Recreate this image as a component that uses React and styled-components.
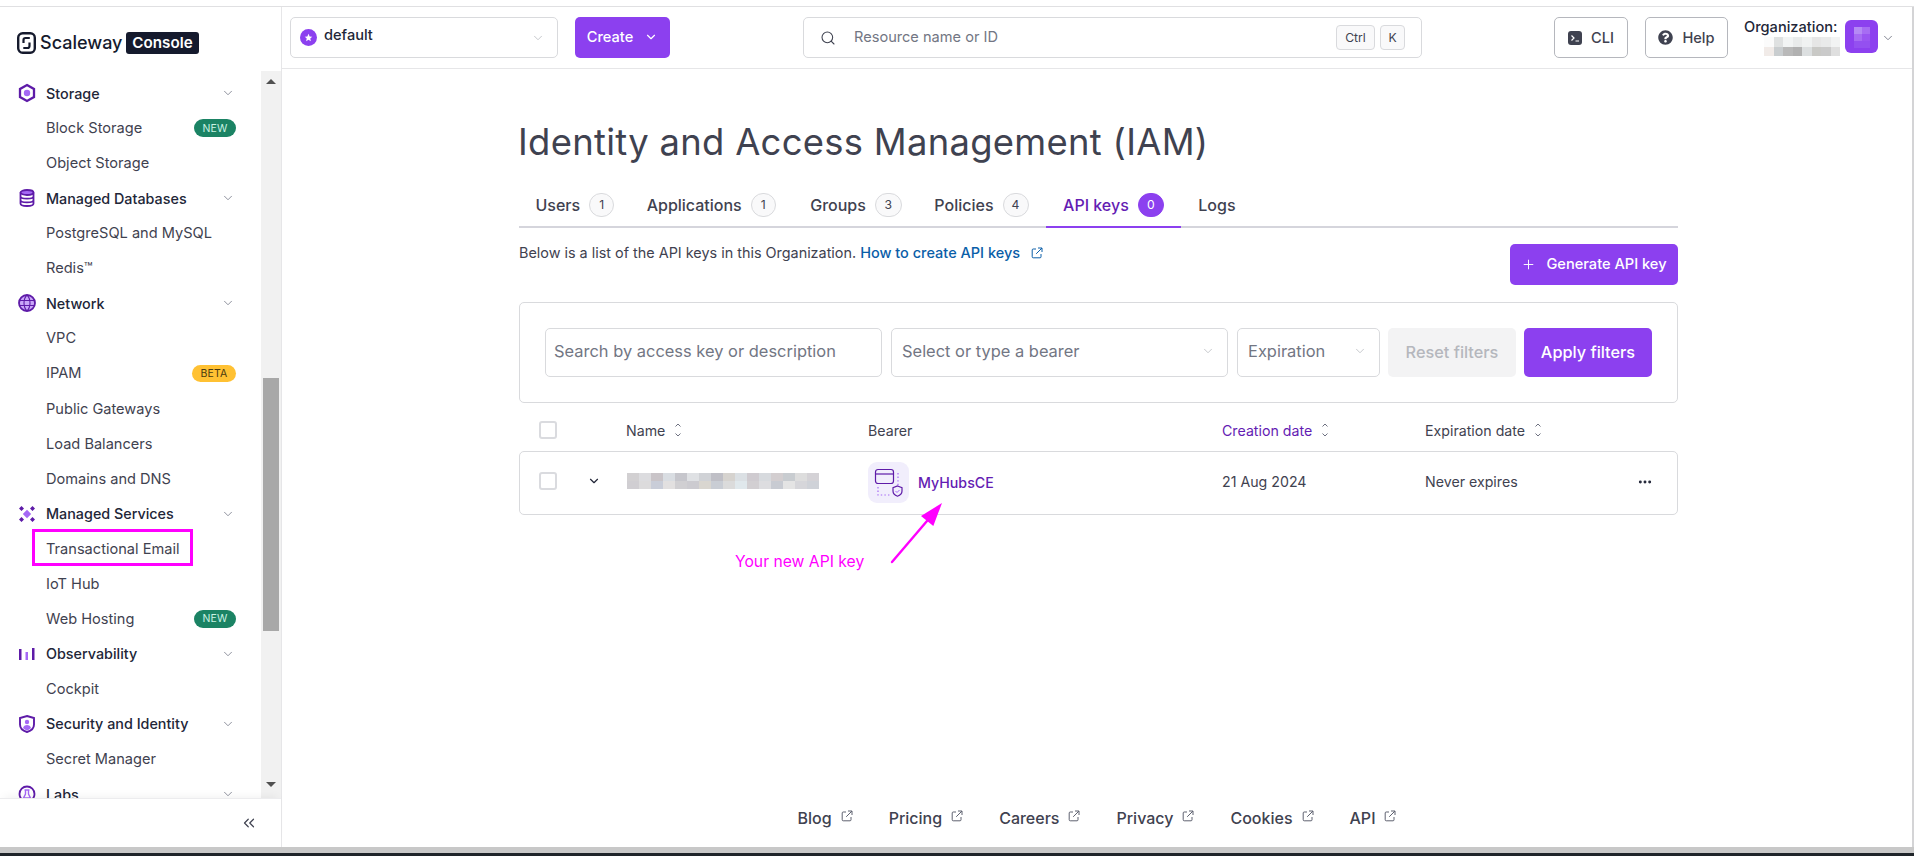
import React from "react";
import styled, { createGlobalStyle } from "styled-components";
import { ChevronDown, ChevronsLeft, Search, Plus, Ellipsis } from "lucide-react";
import { FaQuestionCircle } from "react-icons/fa";

const Global = createGlobalStyle`
  html, body { margin: 0; padding: 0; height: 856px; overflow: hidden; background: #fff; }
  body { font-family: Inter, "Liberation Sans", sans-serif; color: #3f4250; }
  * { box-sizing: border-box; }
`;

const Page = styled.div`
  width: 1914px; height: 856px; display: flex; flex-direction: column; overflow: hidden; background: #fff;
`;
const TopStrip = styled.div`
  height: 7px; flex: none; border-bottom: 1px solid #e0e0e2; background: #fff;
`;
const Shell = styled.div`
  flex: 1; min-height: 0; display: flex; border-right: 2px solid #d4d4d6;
`;
const BottomBar = styled.div`
  height: 6px; flex: none; background: #c8c8c8;
`;
const Taskbar = styled.div`
  height: 3px; flex: none; background: #1f2429;
`;

/* sidebar */
const Sidebar = styled.aside`
  width: 282px; flex: none; display: flex; flex-direction: column; border-right: 1px solid #e6e6e8;
`;
const LogoBar = styled.div`
  height: 64px; flex: none; display: flex; align-items: center; padding: 7px 0 0 17px;
`;
const LogoWord = styled.span`
  margin-left: 4px; width: 81px; font-size: 18px; font-weight: 500; color: #151a2d; white-space: nowrap;
`;
const LogoBadge = styled.span`
  margin-left: 5px; height: 22px; width: 73px; display: flex; align-items: center; justify-content: center;
  background: #151a2d; color: #fff; font-size: 15.2px; font-weight: 600; border-radius: 3px;
`;
const SideBody = styled.div`
  flex: 1; min-height: 0; display: flex;
`;
const Nav = styled.nav`
  width: 261px; flex: none; overflow: hidden; padding-top: 4.6px;
`;
const NavGroup = styled.div`
  height: 35.05px; display: flex; align-items: center; padding: 0 26px 0 17px;
  font-size: 14.35px; font-weight: 500; color: #222638;
`;
const NavIcon = styled.span`
  width: 20px; height: 20px; flex: none; margin-right: 9px; display: flex; align-items: center; justify-content: center;
`;
const NavLabel = styled.span`
  flex: 1; white-space: nowrap;
`;
const NavItem = styled.div`
  position: relative; height: 35.05px; display: flex; align-items: center; padding: 0 25px 0 46px;
  font-size: 14.6px; color: #3f4250;
`;
const Highlight = styled.span`
  position: absolute; left: 32px; top: -2px; width: 161px; height: 37px; border: 3px solid #ff00ff;
`;
const Pill = styled.span`
  height: ${p => (p.$beta ? 17 : 18)}px; width: ${p => (p.$beta ? 44 : 42)}px; display: flex; align-items: center; justify-content: center;
  border-radius: 9px; font-size: 10.5px; letter-spacing: 0.2px;
  background: ${p => (p.$beta ? "#ffc133" : "#1b8364")};
  color: ${p => (p.$beta ? "#4a3a10" : "#c9f2e3")};
`;
const Scrollbar = styled.div`
  width: 20px; flex: none; background: #f1f1f1; position: relative; display: flex; flex-direction: column; align-items: center;
`;
const ArrowUp = styled.span`
  margin-top: 8px; width: 0; height: 0; border-left: 5px solid transparent; border-right: 5px solid transparent; border-bottom: 5px solid #505050;
`;
const Thumb = styled.div`
  margin-top: 294px; width: 16px; height: 253px; background: #a8a8a8;
`;
const ArrowDown = styled.span`
  margin-top: 151px; width: 0; height: 0; border-left: 5px solid transparent; border-right: 5px solid transparent; border-top: 5px solid #505050;
`;
const SideFooter = styled.div`
  height: 49px; flex: none; display: flex; align-items: center; justify-content: flex-end; padding-right: 23px;
  border-top: 1px solid #ececee; box-shadow: 0 -6px 8px -4px rgba(0,0,0,.05); background: #fff; position: relative; color: #3f4250;
`;

/* main */
const Main = styled.main`
  flex: 1; min-width: 0; position: relative; display: flex; flex-direction: column;
`;
const Header = styled.header`
  height: 62px; flex: none; display: flex; align-items: center; padding: 0 0 0 8px; border-bottom: 1px solid #e6e6e8;
`;
const ProjectSelect = styled.div`
  width: 268px; height: 41px; display: flex; align-items: center; padding: 0 12px 0 9px;
  border: 1px solid #d9dadd; border-radius: 5px; font-size: 14.6px; font-weight: 500; color: #222638;
`;
const ProjectDot = styled.span`
  width: 17px; height: 17px; flex: none; margin-right: 7px; border-radius: 50%; background: #8c40ef; color: #fff;
  display: flex; align-items: center; justify-content: center;
`;
const Grow = styled.span`
  flex: 1; margin-bottom: 5px;
`;
const PrimaryButton = styled.button`
  height: ${p => p.$h || 41}px; width: ${p => p.$w}px; flex: none; margin-left: ${p => p.$ml || 0}px; border: 0; border-radius: 5px;
  background: #8c40ef; color: #fff; font-family: inherit; font-size: ${p => p.$fs || 14.6}px; font-weight: 500;
  display: flex; align-items: center; justify-content: center; gap: ${p => p.$gap || 8}px; padding: ${p => p.$pb ? `0 0 ${p.$pb}px` : 0};
`;
const TopSearch = styled.div`
  width: 619px; height: 41px; flex: none; margin-left: 133px; display: flex; align-items: center; padding: 0 16px 0 16px;
  border: 1px solid #d9dadd; border-radius: 5px; font-size: 14.6px; color: #727683;
`;
const SearchText = styled.span`
  flex: 1; margin-left: 18px; margin-bottom: 1px;
`;
const Kbd = styled.span`
  height: 25px; width: ${p => p.$w}px; margin-left: ${p => p.$ml || 0}px; display: flex; align-items: center; justify-content: center;
  border: 1px solid #d9dadd; border-radius: 4px; background: #f9f9fa; font-size: 12.2px; color: #3f4250;
`;
const OutlineButton = styled.button`
  height: 41px; width: ${p => p.$w}px; flex: none; margin-left: ${p => p.$ml}px; display: flex; align-items: center; justify-content: center; gap: 9px; padding: 0;
  background: #fff; border: 1px solid #b5b7bd; border-radius: 5px; font-family: inherit; font-size: 14.6px; font-weight: 500; color: #3f4250;
`;
const OrgBlock = styled.div`
  width: 96px; margin-left: 16px; flex: none; height: 41px; margin-top: -1px; position: relative; font-size: 14.6px; font-weight: 500; color: #222638;
`;
const OrgName = styled.div`
  padding-top: 1px; line-height: 18px; white-space: nowrap;
`;
const Blur = styled.svg`
  display: block; flex: none; shape-rendering: crispEdges;
`;
const Avatar = styled.svg`
  flex: none; margin-left: 5px; margin-top: -3px; display: block;
`;
const OrgChevron = styled.span`
  margin-left: 3px; color: #727683; display: flex; margin-top: 0;
`;

const Content = styled.div`
  flex: 1; min-height: 0; padding: 50px 234px 0 237px;
`;
const Title = styled.h1`
  margin: -1px 0 0 -1px; height: 48px; font-size: 36.4px; line-height: 48px; font-weight: 400; color: #3f4250; letter-spacing: 0.3px; white-space: nowrap;
`;
const Tabs = styled.div`
  margin-top: 17px; height: 45px; display: flex; border-bottom: 2px solid #d5d5dc; font-size: 16px; font-weight: 500;
`;
const Tab = styled.div`
  height: 45px; padding: 0 ${p => p.$pr ?? 16}px 0 ${p => p.$pl ?? 17.5}px; display: flex; align-items: center; gap: 9px;
  color: ${p => (p.$active ? "#641cb3" : "#3f4250")};
  border-bottom: 2px solid ${p => (p.$active ? "#8c40ef" : "transparent")};
`;
const Count = styled.span`
  width: ${p => p.$w || 25}px; height: 24px; border-radius: 12px; display: flex; align-items: center; justify-content: center; font-size: 12.2px; font-weight: 400;
  border: 1px solid ${p => (p.$active ? "#8c40ef" : "#d9dadd")};
  background: ${p => (p.$active ? "#8c40ef" : "#f9f9fa")};
  color: ${p => (p.$active ? "#fff" : "#3f4250")};
`;
const DescRow = styled.div`
  margin-top: 16px; display: flex; justify-content: space-between; align-items: flex-start;
`;
const Desc = styled.p`
  margin: -1px 0 0; font-size: 14.4px; line-height: 20px; color: #3f4250; white-space: nowrap; display: flex; align-items: center;
`;
const DocLink = styled.a`
  margin-left: 4px; color: #0a5ea8; font-weight: 500; font-size: 14.5px; display: flex; align-items: center; gap: 11px;
`;
const FilterCard = styled.section`
  margin-top: 17px; height: 101px; border: 1px solid #d9dadd; border-radius: 5px; padding: 25px 25px 0 25px; display: flex;
`;
const Field = styled.div`
  width: ${p => p.$w}px; height: 49px; flex: none; margin-right: ${p => p.$mr}px; display: flex; align-items: center; padding: 0 ${p => p.$right || 12}px 3px ${p => p.$left || 10}px;
  border: 1px solid #d9dadd; border-radius: 5px; font-size: 16.45px; color: #727683;
`;
const FieldText = styled.span`
  flex: 1; white-space: nowrap;
`;
const ResetButton = styled.div`
  width: 128px; height: 49px; flex: none; margin-right: 8px; padding-bottom: 1px; border-radius: 5px; background: #f3f3f4; color: #b5b7bd;
  font-size: 16.3px; font-weight: 500; display: flex; align-items: center; justify-content: center;
`;
const TableGrid = `
  display: grid; grid-template-columns: 18px 69px 242px 354px 203px 1fr; align-items: center;
`;
const TableHead = styled.div`
  ${TableGrid}
  margin-top: 6px; height: 42px; padding-left: 20px; font-size: 14.2px; color: #3f4250;
`;
const HeadCell = styled.div`
  display: flex; align-items: center; gap: 9px; white-space: nowrap; color: ${p => (p.$active ? "#641cb3" : "#3f4250")};
`;
const Check = styled.span`
  width: 18px; height: 18px; display: block; border: 2px solid #dadbdf; border-radius: 3px; background: #fff;
`;
const TableRow = styled.div`
  ${TableGrid}
  height: 64px; padding: 0 0 4px 19px; border: 1px solid #d9dadd; border-radius: 5px; font-size: 14.2px; color: #3f4250; position: relative;
`;
const RowChevron = styled.span`
  padding-left: 30px; display: flex; color: #222638;
`;
const NameBlur = styled.div`
  margin-left: 1px;
`;
const BearerCell = styled.div`
  display: flex; align-items: center; gap: 9px; margin-top: 2px;
`;
const BearerLink = styled.a`
  color: #641cb3; font-weight: 500;
`;
const RowDots = styled.span`
  position: absolute; right: 24px; top: 22px; display: flex; color: #222638;
`;
const Footer = styled.footer`
  height: 56px; flex: none; display: flex; align-items: center; justify-content: center; gap: 36px; padding-bottom: 2px; font-size: 16px; font-weight: 500; color: #3f4250;
`;
const FooterLink = styled.a`
  display: flex; align-items: flex-start; gap: 9px;
`;
const FooterIcon = styled.span`
  display: flex; margin-top: 2px; color: #5f6270;
`;
const ArrowNote = styled.div`
  position: absolute; left: 453px; top: 489px; width: 220px; height: 80px; pointer-events: none;
`;
const ArrowSvg = styled.svg`
  position: absolute; left: 150px; top: 0;
`;
const NoteText = styled.span`
  position: absolute; left: 0; top: 56px; font-size: 15.7px; line-height: 20px; color: #ff00ff; white-space: nowrap;
`;

const Ext = ({ size = 12, color = "currentColor" }) => (
  <svg width={size} height={size} viewBox="0 0 12 12" fill="none" stroke={color} strokeWidth="1">
    <path d="M5 2H2.2a1 1 0 0 0-1 1v6.8a1 1 0 0 0 1 1H9a1 1 0 0 0 1-1V7" />
    <path d="M7 1h4v4M11 1 5.2 6.8" />
  </svg>
);

const Sort = () => (
  <svg width="8" height="16" viewBox="0 0 8 16" fill="none" stroke="#6d7080" strokeWidth="1">
    <path d="M1.5 4.5 4 2l2.500 2.500M1.500 11.500 4 14l2.500-2.500" />
  </svg>
);

const D = "#5e1ba8";
const L = "#a568f5";
const icons = {
  storage: (
    <svg width="18" height="20" viewBox="0 0 18 20"><path d="M9 2 16 6v8l-7 4-7-4V6z" fill="#fff" stroke={D} strokeWidth="2.300" /><circle cx="9" cy="10" r="3.200" fill={L} /></svg>
  ),
  db: (
    <svg width="16" height="18" viewBox="0 0 16 18" fill="none" stroke={D} strokeWidth="1.800"><ellipse cx="8" cy="3.500" rx="6.500" ry="2.500" fill={L} /><path d="M1.500 3.500v11c0 1.400 2.900 2.500 6.500 2.500s6.500-1.100 6.500-2.500v-11M1.500 7.200c0 1.400 2.900 2.400 6.500 2.400s6.500-1 6.500-2.400M1.500 11c0 1.400 2.900 2.400 6.500 2.400s6.500-1 6.500-2.400" /></svg>
  ),
  network: (
    <svg width="18" height="18" viewBox="0 0 18 18" fill="none"><circle cx="9" cy="9" r="8" fill="#c9a6f8" stroke={D} strokeWidth="1.800" /><path d="M1.500 6.500h15M1.500 11.500h15M9 1c-4 4-4 12 0 16M9 1c4 4 4 12 0 16" stroke={D} strokeWidth="1.100" /></svg>
  ),
  services: (
    <svg width="16" height="16" viewBox="0 0 16 16"><path d="M8 3.800 12.200 8 8 12.200 3.800 8z" fill={L} /><path d="M2.500 0 5 2.500 2.500 5 0 2.500zM13.500 0 16 2.500 13.500 5 11 2.500zM2.500 11 5 13.500 2.500 16 0 13.500zM13.500 11 16 13.500 13.500 16 11 13.500z" fill={D} /></svg>
  ),
  observ: (
    <svg width="16" height="12" viewBox="0 0 16 12"><rect x="0" y="1" width="2.500" height="11" fill={D} /><rect x="6.500" y="4" width="2.500" height="8" fill={L} /><rect x="13" y="0" width="2.500" height="12" fill={D} /></svg>
  ),
  security: (
    <svg width="16" height="18" viewBox="0 0 16 18"><path d="M8 1 15 3v6.500c0 3.800-3 6.400-7 7.500-4-1.100-7-3.700-7-7.500V3z" fill="#fff" stroke={D} strokeWidth="1.900" /><circle cx="8" cy="7" r="2.200" fill={L} /><path d="M4 13c.5-2 2-3 4-3s3.500 1 4 3c-1 1-2.500 2-4 2.500-1.500-.5-3-1.500-4-2.500z" fill={L} /></svg>
  ),
  labs: (
    <svg width="18" height="18" viewBox="0 0 18 18" fill="none"><circle cx="9" cy="9" r="7.500" stroke={D} strokeWidth="1.800" /><path d="M6.500 5h5M7.500 5v4l-2 4h7l-2-4V5" stroke={L} strokeWidth="1.400" /></svg>
  ),
};

const navData = [
  { g: "Storage", i: "storage" },
  { t: "Block Storage", b: "NEW" },
  { t: "Object Storage" },
  { g: "Managed Databases", i: "db" },
  { t: "PostgreSQL and MySQL" },
  { t: "Redis™" },
  { g: "Network", i: "network" },
  { t: "VPC" },
  { t: "IPAM", b: "BETA" },
  { t: "Public Gateways" },
  { t: "Load Balancers" },
  { t: "Domains and DNS" },
  { g: "Managed Services", i: "services" },
  { t: "Transactional Email", mark: true },
  { t: "IoT Hub" },
  { t: "Web Hosting", b: "NEW" },
  { g: "Observability", i: "observ" },
  { t: "Cockpit" },
  { g: "Security and Identity", i: "security" },
  { t: "Secret Manager" },
  { g: "Labs", i: "labs" },
];

const BlurBlock = ({ rows, cell, h, className }) => (
  <Blur className={className} width={rows[0].length * cell} height={rows.length * h}>
    {rows.map((r, y) => r.map((c, x) => <rect key={`${x}-${y}`} x={x * cell} y={y * h} width={cell} height={h} fill={c} />))}
  </Blur>
);
const OrgBlur = styled(BlurBlock)`
  margin-left: 20px; margin-top: 1px;
`;

const orgRows = [
  ["#fbfbfb", "#dfe1e1", "#f2f4f4", "#e9ebeb", "#f0f2f2", "#e6e6e6", "#e9eaea", "#f2f3f3"],
  ["#f1ebe8", "#c9cdcf", "#b9b9b9", "#b1b1b1", "#dcdfe0", "#c9c9c6", "#cacaca", "#dfdfdf"],
];
const nameRows = [
  ["#d2d0d2", "#dcdcdf", "#c9c4c8", "#d9dde2", "#c6c6cc", "#dfe1e4", "#d0d2d6", "#bfbfc6", "#d6d3cf", "#dbe0e4", "#cfcbd0", "#d7dade", "#d3ced0", "#c8ccd0", "#dddddd", "#d4d2d6"],
  ["#d0ced2", "#dcdbdc", "#c9cdd8", "#e2e0e0", "#d0cfd2", "#cccbd0", "#d9d6d0", "#c9cdd4", "#dbdbdb", "#e0e8ec", "#d2cfd2", "#dddde0", "#c8cbd2", "#e4e4e4", "#d6d6da", "#cfd2d8"],
];

const footerLinks = ["Blog", "Pricing", "Careers", "Privacy", "Cookies", "API"];

export default function App() {
  return (
    <Page>
      <Global />
      <TopStrip />
      <Shell>
        <Sidebar>
          <LogoBar>
            <svg width="19" height="22" viewBox="0 0 19 22" fill="none" stroke="#151a2d">
              <rect x="1.200" y="1.200" width="16.600" height="19.600" rx="4.500" strokeWidth="2.400" />
              <path d="M12.800 6H8.500a2 2 0 0 0-2 2v3M6.300 16h4.200a2 2 0 0 0 2-2v-3.500" strokeWidth="2.200" />
            </svg>
            <LogoWord>Scaleway</LogoWord>
            <LogoBadge>Console</LogoBadge>
          </LogoBar>
          <SideBody>
            <Nav>
              {navData.map(n =>
                n.g ? (
                  <NavGroup key={n.g}>
                    <NavIcon>{icons[n.i]}</NavIcon>
                    <NavLabel>{n.g}</NavLabel>
                    <ChevronDown size={14} strokeWidth={1.3} color="#6d7080" />
                  </NavGroup>
                ) : (
                  <NavItem key={n.t}>
                    <NavLabel>{n.t}</NavLabel>
                    {n.b && <Pill $beta={n.b === "BETA"}>{n.b}</Pill>}
                    {n.mark && <Highlight />}
                  </NavItem>
                )
              )}
            </Nav>
            <Scrollbar>
              <ArrowUp />
              <Thumb />
              <ArrowDown />
            </Scrollbar>
          </SideBody>
          <SideFooter>
            <ChevronsLeft size={18} strokeWidth={1.6} />
          </SideFooter>
        </Sidebar>

        <Main>
          <Header>
            <ProjectSelect>
              <ProjectDot>
                <svg width="9" height="9" viewBox="0 0 24 24" fill="#fff"><path d="m12 2 3 7 7 .7-5.300 4.700L18.300 22 12 18l-6.300 4 1.600-7.600L2 9.700 9 9z" /></svg>
              </ProjectDot>
              <Grow>default</Grow>
              <ChevronDown size={14} strokeWidth={1.3} color="#b5b7bd" />
            </ProjectSelect>
            <PrimaryButton $w={95} $ml={17} $gap={11} $pb={2}>
              Create <ChevronDown size={14} strokeWidth={2} />
            </PrimaryButton>
            <TopSearch>
              <Search size={16} strokeWidth={1.6} color="#3f4250" />
              <SearchText>Resource name or ID</SearchText>
              <Kbd $w={39}>Ctrl</Kbd>
              <Kbd $w={25} $ml={5}>K</Kbd>
            </TopSearch>
            <OutlineButton $w={74} $ml={132}>
              <svg width="14" height="14" viewBox="0 0 14 14"><rect width="14" height="14" rx="3" fill="#3f4250" /><path d="M3.500 4.500 6 7 3.500 9.500M7.500 10h3.500" fill="none" stroke="#fff" strokeWidth="1.200" /></svg>
              CLI
            </OutlineButton>
            <OutlineButton $w={83} $ml={17}>
              <FaQuestionCircle size={15} color="#3f4250" />
              Help
            </OutlineButton>
            <OrgBlock>
              <OrgName>Organization:</OrgName>
              <OrgBlur rows={orgRows} cell={9.500} h={9.500} />
            </OrgBlock>
            <Avatar width="33" height="33" viewBox="0 0 33 33">
              <rect width="33" height="33" rx="6" fill="#8c40ef" />
              <rect x="9" y="7" width="8" height="7" fill="#b58af5" />
              <rect x="17" y="7" width="8" height="7" fill="#a76cf3" />
              <rect x="9" y="14" width="8" height="7" fill="#a76cf3" />
              <rect x="17" y="14" width="8" height="7" fill="#9a55f1" />
              <rect x="9" y="21" width="8" height="7" fill="#9450f0" />
              <rect x="17" y="21" width="8" height="7" fill="#9450f0" />
            </Avatar>
            <OrgChevron><ChevronDown size={14} strokeWidth={1.5} /></OrgChevron>
          </Header>

          <Content>
            <Title>Identity and Access Management (IAM)</Title>
            <Tabs>
              <Tab $pl={16.5} $pr={15}>Users <Count>1</Count></Tab>
              <Tab $pr={17}>Applications <Count>1</Count></Tab>
              <Tab $pr={15}>Groups <Count $w={27}>3</Count></Tab>
              <Tab $pr={17}>Policies <Count $w={26}>4</Count></Tab>
              <Tab $active $pr={17}>API keys <Count $active $w={26}>0</Count></Tab>
              <Tab>Logs</Tab>
            </Tabs>
            <DescRow>
              <Desc>
                Below is a list of the API keys in this Organization.
                <DocLink>How to create API keys <Ext size={12} /></DocLink>
              </Desc>
              <PrimaryButton $w={168} $gap={10} $pb={1}>
                <Plus size={15} strokeWidth={1.5} /> Generate API key
              </PrimaryButton>
            </DescRow>

            <FilterCard>
              <Field $w={337} $mr={9} $left={8}><FieldText>Search by access key or description</FieldText></Field>
              <Field $w={337} $mr={9}>
                <FieldText>Select or type a bearer</FieldText>
                <ChevronDown size={14} strokeWidth={1.3} color="#b5b7bd" />
              </Field>
              <Field $w={143} $mr={8}>
                <FieldText>Expiration</FieldText>
                <ChevronDown size={14} strokeWidth={1.3} color="#b5b7bd" />
              </Field>
              <ResetButton>Reset filters</ResetButton>
              <PrimaryButton $w={128} $h={49} $fs={16.3} $pb={1}>Apply filters</PrimaryButton>
            </FilterCard>

            <TableHead>
              <Check />
              <span />
              <HeadCell>Name <Sort /></HeadCell>
              <HeadCell>Bearer</HeadCell>
              <HeadCell $active>Creation date <Sort /></HeadCell>
              <HeadCell>Expiration date <Sort /></HeadCell>
            </TableHead>
            <TableRow>
              <Check />
              <RowChevron><ChevronDown size={14} strokeWidth={2} /></RowChevron>
              <NameBlur><BlurBlock rows={nameRows} cell={12} h={8} /></NameBlur>
              <BearerCell>
                <svg width="41" height="41" viewBox="0 0 41 41" fill="none">
                  <rect width="41" height="41" rx="9" fill="#f1eefc" />
                  <rect x="7.500" y="7.500" width="18" height="14" rx="2.500" stroke="#5e1ba8" strokeWidth="1.200" />
                  <path d="M7.500 12h18" stroke="#5e1ba8" strokeWidth="1.200" />
                  <path d="M30 11v13M10 25v8h12" stroke="#a568f5" strokeWidth="1.200" strokeDasharray="1.400 2.200" />
                  <path d="M29.500 24l4.500 1.600v3.400c0 2.800-2 4.400-4.500 5.200-2.500-.8-4.500-2.400-4.500-5.200v-3.400z" fill="#f1eefc" stroke="#5e1ba8" strokeWidth="1.200" />
                  <path d="M27.500 29l1.500 1.500 2.500-2.500" stroke="#a568f5" strokeWidth="1" />
                </svg>
                <BearerLink>MyHubsCE</BearerLink>
              </BearerCell>
              <span>21 Aug 2024</span>
              <span>Never expires</span>
              <RowDots><Ellipsis size={16} strokeWidth={2.4} /></RowDots>
            </TableRow>
          </Content>

          <Footer>
            {footerLinks.map(l => (
              <FooterLink key={l}>
                {l}
                <FooterIcon><Ext size={12} /></FooterIcon>
              </FooterLink>
            ))}
          </Footer>

          <ArrowNote>
            <NoteText>Your new API key</NoteText>
            <ArrowSvg width="60" height="70" viewBox="0 0 60 70">
              <path d="M7 66 42 25" stroke="#ff00ff" strokeWidth="2.400" strokeLinecap="round" />
              <path d="M57 7 48.300 30 36 20z" fill="#ff00ff" />
            </ArrowSvg>
          </ArrowNote>
        </Main>
      </Shell>
      <BottomBar />
      <Taskbar />
    </Page>
  );
}
